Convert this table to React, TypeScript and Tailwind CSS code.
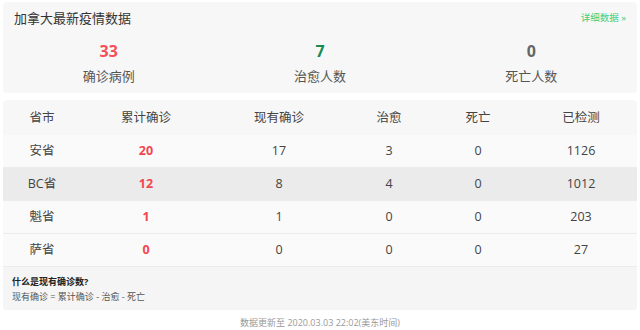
const stats = [
  { value: "33", label: "确诊病例", color: "text-[#f5505a]" },
  { value: "7", label: "治愈人数", color: "text-[#178c52]" },
  { value: "0", label: "死亡人数", color: "text-[#666666]" },
];

const rows = [
  { name: "安省", total: 20, active: 17, cured: 3, dead: 0, tested: 1126 },
  { name: "BC省", total: 12, active: 8, cured: 4, dead: 0, tested: 1012 },
  { name: "魁省", total: 1, active: 1, cured: 0, dead: 0, tested: 203 },
  { name: "萨省", total: 0, active: 0, cured: 0, dead: 0, tested: 27 },
];

const cols = "grid grid-cols-[78px_130px_136px_84px_94px_1fr]";

export default function App() {
  return (
    <div
      className="w-[640px] h-[330px] bg-white px-[3px] pt-[2px] text-[#333]"
      style={{ fontFamily: '"Open Sans", "Noto Sans CJK SC", sans-serif' }}
    >
      {/* summary */}
      <div className="h-[91px] rounded-[4px] bg-[#f7f7f7]">
        <div className="flex items-center justify-between h-[32px] pl-[11px] pr-[11px] pt-[1px]">
          <span className="text-[13px] text-[#333]">加拿大最新疫情数据</span>
          <span className="text-[9.5px] text-[#3ccf7a]">详细数据 »</span>
        </div>
        <div className="grid grid-cols-3 mt-[6px]">
          {stats.map((s) => (
            <div key={s.label} className="flex flex-col items-center">
              <span className={`text-[16px] font-bold leading-[22px] ${s.color}`}>{s.value}</span>
              <span className="text-[13px] leading-[22px] mt-[3px] text-[#555]">{s.label}</span>
            </div>
          ))}
        </div>
      </div>

      {/* table */}
      <div className="mt-[7px] rounded-[4px] bg-[#f7f7f7] overflow-hidden text-[12.5px]">
        <div className={`${cols} h-[35px] items-center text-center text-[#444] pt-[1px]`}>
          <span>省市</span>
          <span>累计确诊</span>
          <span>现有确诊</span>
          <span>治愈</span>
          <span>死亡</span>
          <span>已检测</span>
        </div>
        {rows.map((r, i) => (
          <div
            key={r.name}
            className={`${cols} h-[33px] items-center text-center text-[#444] border-b border-[#ececec] ${
              i === 1 ? "bg-[#ebebeb]" : "bg-[#fafafa]"
            }`}
          >
            <span>{r.name}</span>
            <span className="font-bold text-[#f5454f]">{r.total}</span>
            <span>{r.active}</span>
            <span>{r.cured}</span>
            <span>{r.dead}</span>
            <span>{r.tested}</span>
          </div>
        ))}
        <div className="h-[43px] bg-[#f5f5f5] pl-[9px] pt-[7px] text-[9px] leading-[15px]">
          <div className="font-bold text-[#222]">什么是现有确诊数?</div>
          <div className="text-[#555]">现有确诊 = 累计确诊 - 治愈 - 死亡</div>
        </div>
      </div>

      <div className="mt-[6px] text-center text-[9px] text-[#999]">数据更新至 2020.03.03 22:02(美东时间)</div>
    </div>
  );
}
